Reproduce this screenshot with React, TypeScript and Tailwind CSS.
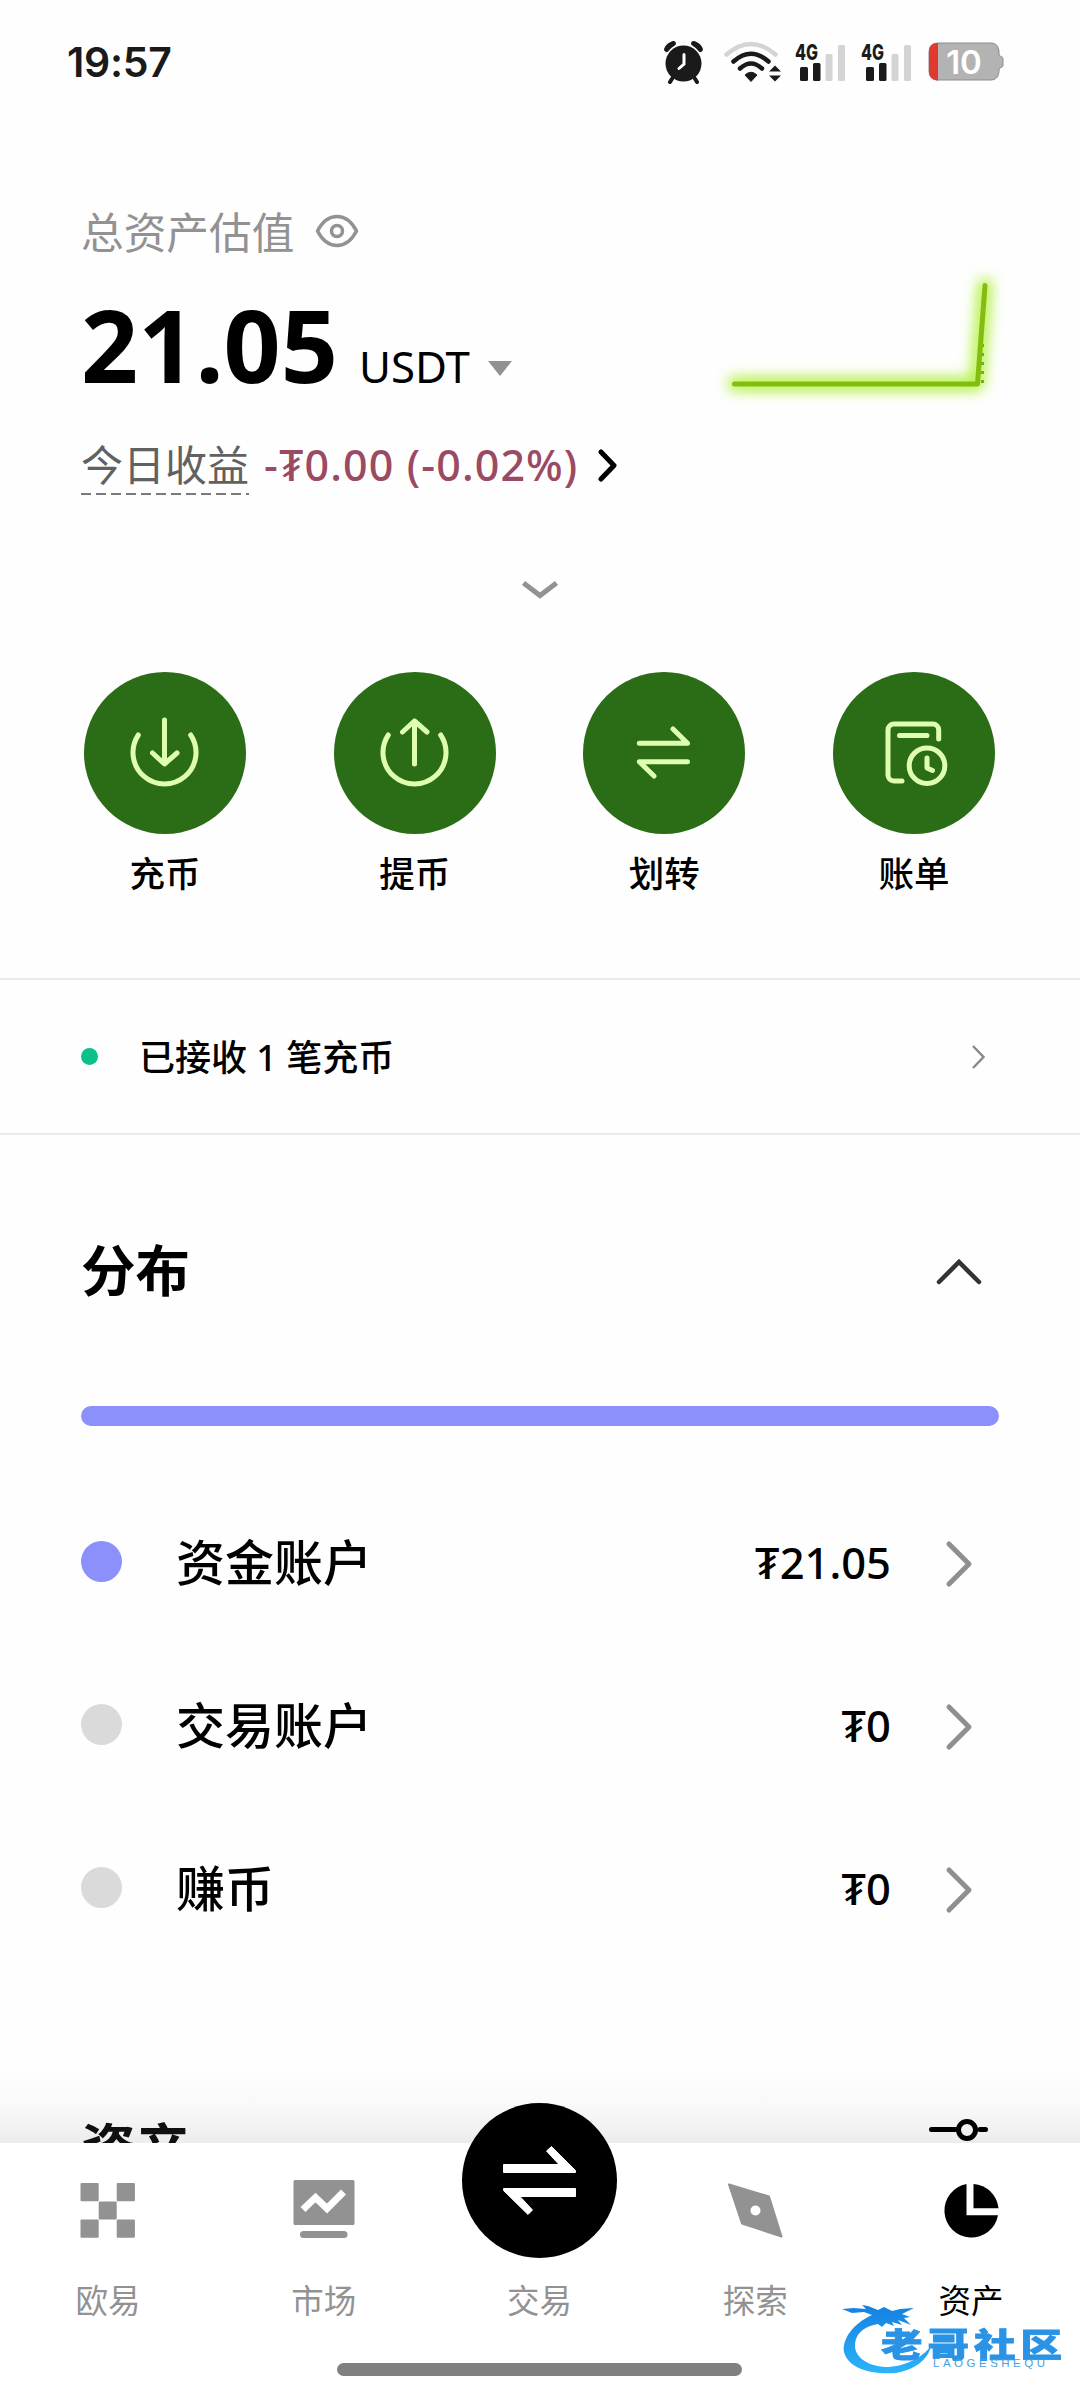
import type { ReactNode } from "react";

const cjk = "font-['Noto_Sans_CJK_SC',sans-serif]";

const Signal = () => (
  <svg width="52" height="40" viewBox="0 0 52 40">
    <text x="1" y="18" fontSize="21.5" fontWeight="800" textLength="23" lengthAdjust="spacingAndGlyphs" fill="#1a1a1a" fontFamily="Inter, sans-serif">
      4G
    </text>
    <rect x="6" y="25" width="8" height="14" rx="1.5" fill="#1a1a1a" />
    <rect x="19" y="21" width="7.5" height="18" rx="1.5" fill="#1a1a1a" />
    <rect x="31.5" y="12" width="7" height="27" rx="1.5" fill="#d4d4d4" />
    <rect x="44" y="3" width="7" height="36" rx="1.5" fill="#d4d4d4" />
  </svg>
);

const StatusBar = () => (
  <div className="flex h-[124px] items-center justify-between pl-[67px] pr-[76px]">
    <span className="font-['Inter',sans-serif] text-[41px] leading-[50px] font-semibold tracking-[-0.3px] text-[#1a1a1a]">
      19:57
    </span>
    <div className="flex items-center">
      {/* alarm */}
      <svg width="42" height="44" viewBox="0 0 42 44" fill="none">
        <circle cx="20.5" cy="23.5" r="18" fill="#1a1a1a" />
        <path d="M3.5 9.5Q5.500 5 10.500 3.500Q8 4.500 3.500 9.500zM37.500 9.500Q35.500 5 30.500 3.500Q33 4.500 37.500 9.500z" stroke="#1a1a1a" strokeWidth="5" strokeLinecap="round" strokeLinejoin="round" />
        <path d="M9.500 38l-2.500 4M31.500 38l2.500 4" stroke="#1a1a1a" strokeWidth="4" strokeLinecap="round" />
        <path d="M21 14.500v9.500l-5 4.500" stroke="#fff" strokeWidth="3" strokeLinecap="round" />
      </svg>
      {/* wifi */}
      <svg className="ml-[18px]" width="58" height="42" viewBox="0 0 58 42" fill="none">
        <path d="M3.500 13.500Q28 -7.500 52.500 13.500" stroke="#d4d4d4" strokeWidth="4.500" strokeLinecap="round" />
        <path d="M10.500 20.500Q28 5 45.500 20.500" stroke="#1a1a1a" strokeWidth="4.500" strokeLinecap="round" />
        <path d="M17 27.500Q28 17.500 39 27.500" stroke="#1a1a1a" strokeWidth="4.500" strokeLinecap="round" />
        <path d="M28 40.500l-6-6.500Q28 28.500 34 34z" fill="#1a1a1a" stroke="#1a1a1a" strokeLinejoin="round" />
        <path d="M46 30.500l6-6 6 6zM46 34.500h12l-6 6z" fill="#1a1a1a" />
      </svg>
      <div className="ml-[13px] flex gap-[14px]">
        <Signal />
        <Signal />
      </div>
      {/* battery */}
      <svg className="ml-[16px] overflow-visible" width="76" height="40" viewBox="0 0 76 40">
        <path d="M10 1h53q7 0 8 8v3q0 2 2 2.500t2 2.500v6q0 2-2 2.500t-2 2.500v2q-1 8-8 8H10q-9 0-9-9V10q0-9 9-9z" fill="#b3b3b3" stroke="#8c8c8c" />
        <path d="M8.500 1H10v37.500H8.500Q1 37 1 29V10q0-8 7.500-9z" fill="#e03a30" />
        <text x="36" y="32" fontSize="33" fontWeight="600" textAnchor="middle" fill="#fff" fontFamily="Inter, sans-serif">
          10
        </text>
      </svg>
    </div>
  </div>
);

const Sparkline = () => (
  <svg className="absolute top-[270px] left-[715px] overflow-visible" width="290" height="135" viewBox="0 0 290 135" fill="none">
    <path
      className="blur-[7px]"
      d="M19 114H262L270 15"
      stroke="#a9f02c"
      strokeWidth="13"
      strokeLinecap="round"
      strokeLinejoin="round"
    />
    <path d="M267.500 74V117" stroke="#7bab22" strokeWidth="3" strokeDasharray="3 6" />
    <path d="M19.500 114H262.500L270 15.500" stroke="#84bd10" strokeWidth="5" strokeLinecap="round" strokeLinejoin="round" />
  </svg>
);

const Summary = () => (
  <section className="px-[81px]">
    <div className="mt-[82px] flex h-12 items-center">
      <span className={`${cjk} text-[42.700px] leading-[48px] font-normal text-[#929292]`}>总资产估值</span>
      <svg className="mt-[2px] ml-[21px]" width="44" height="34" viewBox="0 0 44 34" fill="none" stroke="#929292" strokeWidth="3.500">
        <path d="M2.500 17Q10 2.500 22 2.500T41.500 17Q34 31.500 22 31.500T2.500 17z" strokeLinejoin="round" />
        <circle cx="22" cy="17" r="5.500" />
      </svg>
    </div>

    <div className="mt-[40px] flex h-[100px] items-baseline font-['Noto_Sans',sans-serif] text-black">
      <span className="text-[100px] leading-none font-bold">21.05</span>
      <span className="ml-[21px] text-[43.800px] leading-none">USDT</span>
      <svg className="ml-[18px] -translate-y-[7px]" width="24" height="15" viewBox="0 0 24 15">
        <path d="M0 0h24L12 15z" fill="#929292" />
      </svg>
    </div>

    <div className="mt-[41px] flex h-[60px] items-start">
      <div>
        <div className={`${cjk} text-[42px] leading-[56px] text-[#616161]`}>今日收益</div>
        <div className="mt-0.5 h-[2px] bg-[repeating-linear-gradient(90deg,#7a7a7a_0_10px,transparent_10px_15px)]" />
      </div>
      <span className="ml-[15px] font-['Noto_Sans',sans-serif] text-[43px] leading-[60px] font-medium tracking-[1.100px] whitespace-nowrap text-[#9b4a63]">
        -₮0.00 (-0.02%)
      </span>
      <svg className="mt-[13px] ml-[19px]" width="22" height="34" viewBox="0 0 22 34" fill="none">
        <path d="M4 4l13 13.500L4 31" stroke="#000" strokeWidth="5" strokeLinecap="round" strokeLinejoin="round" />
      </svg>
    </div>

    <div className="mt-[74px] flex h-10 items-center justify-center">
      <svg width="40" height="22" viewBox="0 0 40 22" fill="none">
        <path d="M3.500 5L20 17.500 36.500 5" stroke="#929292" strokeWidth="5" />
      </svg>
    </div>
  </section>
);

const actions: { label: string; icon: ReactNode }[] = [
  {
    label: "充币",
    icon: (
      <>
        <path d="M54.300 63A31.500 31.500 0 1 0 106.700 63" />
        <path d="M80.500 48V91M68.500 81l12 11 12.500-11" />
      </>
    ),
  },
  {
    label: "提币",
    icon: (
      <>
        <path d="M54.300 63A31.500 31.500 0 1 0 106.700 63" />
        <path d="M80.500 92V49M68.500 60l12-11 12.500 11" />
      </>
    ),
  },
  {
    label: "划转",
    icon: <path d="M56.300 71.300H104.500L90 57M104.500 89.700H56.300L71 104" />,
  },
  {
    label: "账单",
    icon: (
      <>
        <path d="M105.700 67V58a6 6 0 0 0-6-6H61a6 6 0 0 0-6 6v45a6 6 0 0 0 6 6h8M66.500 63.500H94" />
        <circle cx="94" cy="93.700" r="17.800" />
        <path d="M94 86v10l5.500 2.500" />
      </>
    ),
  },
];

const Actions = () => (
  <section className="mt-[63px] flex justify-between pr-[85px] pl-[84px]">
    {actions.map((action) => (
      <div key={action.label} className="flex flex-col items-center">
        <div className="size-[162px] rounded-full bg-[#2b6d17]">
          <svg
            width="162"
            height="162"
            viewBox="0 0 162 162"
            fill="none"
            stroke="#dfffaf"
            strokeWidth="5"
            strokeLinecap="round"
            strokeLinejoin="round"
          >
            {action.icon}
          </svg>
        </div>
        <span className={`${cjk} mt-[13px] text-[35.500px] leading-[49px] font-medium text-black`}>{action.label}</span>
      </div>
    ))}
  </section>
);

const Notice = () => (
  <section className="mt-[82px] flex h-[157px] items-center border-y-2 border-[#ebebeb] pr-[94px] pl-[81px]">
    <span className="size-[17px] rounded-full bg-[#0cc088]" />
    <span className="mt-[2px] ml-[41px] font-['Noto_Sans','Noto_Sans_CJK_SC',sans-serif] text-[36px] leading-[48px] font-medium text-black">
      已接收 1 笔充币
    </span>
    <svg className="ml-auto" width="16" height="26" viewBox="0 0 16 26" fill="none">
      <path d="M3 2l10.500 11L3 24" stroke="#8a8a8a" strokeWidth="2.500" />
    </svg>
  </section>
);

const accounts = [
  { name: "资金账户", amount: "₮21.05", dot: "bg-[#8b90fb]" },
  { name: "交易账户", amount: "₮0", dot: "bg-[#dadada]" },
  { name: "赚币", amount: "₮0", dot: "bg-[#dadada]" },
];

const Distribution = () => (
  <section className="mt-[97px] px-[81px]">
    <div className="flex h-[72px] items-center justify-between pr-[15px]">
      <h2 className={`${cjk} text-[54.500px] leading-[72px] font-bold text-black`}>分布</h2>
      <svg className="mt-2" width="50" height="30" viewBox="0 0 50 30" fill="none">
        <path d="M5 25L25 5l20 20" stroke="#333" strokeWidth="4.500" strokeLinecap="round" />
      </svg>
    </div>
    <div className="mt-[102px] h-5 rounded-full bg-[#8b90fb]" />
    <div className="mt-[54px]">
      {accounts.map((account) => (
        <div key={account.name} className="flex h-[163px] items-center pr-[26px]">
          <span className={`size-[41px] rounded-full ${account.dot}`} />
          <span className={`${cjk} mb-[3px] ml-[54px] text-[49px] leading-[60px] font-medium text-black`}>
            {account.name}
          </span>
          <span className="ml-auto font-['Noto_Sans',sans-serif] text-[43.500px] leading-[60px] font-medium text-black">
            {account.amount}
          </span>
          <svg className="mt-[4px] ml-[54px]" width="28" height="50" viewBox="0 0 28 50" fill="none">
            <path d="M4 5l20 20L4 45" stroke="#8f8f8f" strokeWidth="5" strokeLinecap="round" strokeLinejoin="round" />
          </svg>
        </div>
      ))}
    </div>
  </section>
);

const Assets = () => (
  <section className="mt-[141px] flex h-[72px] items-start justify-between pr-[90px] pl-[81px]">
    <h2 className={`${cjk} text-[54.500px] leading-[72px] font-bold text-[#111]`}>资产</h2>
    <svg className="mt-[6px]" width="64" height="60" viewBox="0 0 64 60" fill="none" stroke="#000" strokeWidth="5" strokeLinecap="round">
      <path d="M5.500 13.500H32M54 13.500h5.500" />
      <circle cx="41" cy="14" r="8.500" />
      <path d="M5.500 42H12M34 42h25.500" />
      <circle cx="22" cy="42" r="8.500" />
    </svg>
  </section>
);

const tabs: { label: string; icon: ReactNode; active?: boolean; center?: boolean }[] = [
  {
    label: "欧易",
    icon: (
      <>
        <rect x="4.500" y="3" width="18.200" height="18.200" rx="1" />
        <rect x="40.700" y="3" width="18.200" height="18.200" rx="1" />
        <rect x="22.700" y="21.500" width="18" height="18" rx="1" />
        <rect x="4.500" y="39.500" width="18.200" height="18.200" rx="1" />
        <rect x="40.700" y="39.500" width="18.200" height="18.200" rx="1" />
      </>
    ),
  },
  {
    label: "市场",
    icon: (
      <>
        <rect x="1.500" y="0" width="61" height="45" rx="1.500" />
        <rect x="8" y="51" width="47.500" height="7" rx="3.500" />
        <path d="M11 29.500L23.500 17.500 35 28.500 51.500 12" fill="none" stroke="#fff" strokeWidth="7" />
      </>
    ),
  },
  {
    label: "交易",
    center: true,
    icon: (
      <g stroke="#fff" strokeLinejoin="round">
        <path d="M41.500 61.500H97L84.500 48 89.500 43.500 113.500 67.500V69.500H41.500z" />
        <path d="M113.500 85.500H41.500V87.500L66 111.500 70.500 107 58 93.500H113.500z" />
      </g>
    ),
  },
  {
    label: "探索",
    icon: (
      <>
        <path d="M6 4.500L46 16.500 58.500 56.500 19 43.500z" stroke="currentColor" strokeWidth="2" strokeLinejoin="round" />
        <circle cx="32.500" cy="30.500" r="5" fill="#fff" />
      </>
    ),
  },
  {
    label: "资产",
    active: true,
    icon: (
      <>
        <path d="M27.500 4A27 27 0 1 0 59 35.300H27.500z" />
        <path d="M34.500 4A27 27 0 0 1 59.500 28.300H34.500z" />
      </>
    ),
  },
];

const TabBar = () => (
  <nav className="relative h-[257px] bg-white">
    <div className="flex">
      {tabs.map((tab) => (
        <div
          key={tab.label}
          className={`flex w-[215.800px] flex-col items-center ${tab.active ? "text-black" : "text-[#929292]"}`}
        >
          {tab.center ? (
            <div className="-mt-10 mb-4 size-[155px] rounded-full bg-black">
              <svg width="155" height="155" viewBox="0 0 155 155" fill="#fff">
                {tab.icon}
              </svg>
            </div>
          ) : (
            <svg className="mt-[37px] mb-[34px]" width="64" height="60" viewBox="0 0 64 60" fill="currentColor">
              {tab.icon}
            </svg>
          )}
          <span className={`${cjk} text-[32.500px] leading-[50px]`}>{tab.label}</span>
        </div>
      ))}
    </div>
    <div className="mt-[39px] ml-[337px] h-[13px] w-[405px] rounded-full bg-[#808080]" />
  </nav>
);

const Watermark = () => (
  <div className="absolute top-[2300px] left-[838px] h-[80px] w-[232px]">
    <svg className="absolute top-0 left-0" width="110" height="80" viewBox="0 0 110 80">
      <defs>
        <linearGradient id="dragon" x1="0" y1="0" x2="0" y2="1">
          <stop offset="0" stopColor="#1580e0" />
          <stop offset="1" stopColor="#2bb4fa" />
        </linearGradient>
      </defs>
      <path
        d="M34 15C14 24 4 40 6 52C10 68 32 75 58 73C76 70 90 60 93 46C84 58 66 67 48 67C28 66 16 56 17 44C18 32 28 26 40 24L44 27 48 23 56 26 54 22 64 25 60 20 73 25 66 18 72 17 64 14 76 8 62 9 54 11 46 7 40 10 30 6 24 5 28 9 16 8 4 9 14 13 26 12z"
        fill="url(#dragon)"
      />
    </svg>
    <span
      className={`${cjk} absolute top-[25px] left-[43px] origin-left scale-y-[0.800] text-[41.500px] leading-[36px] font-black tracking-[5px] whitespace-nowrap text-[#2a93e6] [-webkit-text-stroke:1px_#2a93e6]`}
    >
      老哥社区
    </span>
    <span className="absolute top-[58px] left-[95px] font-['Liberation_Sans',sans-serif] text-[11.500px] leading-[10px] tracking-[3.500px] whitespace-nowrap text-[#4a9fe0]">
      LAOGESHEQU
    </span>
  </div>
);

const App = () => {
  return (
    <div className="relative h-[2400px] w-[1080px] overflow-hidden bg-white">
      <main className="relative h-[2143px] overflow-hidden bg-[#fefefe]">
        <div className="flex flex-col *:shrink-0">
          <StatusBar />
          <Summary />
          <Actions />
          <Notice />
          <Distribution />
          <Assets />
        </div>
        <Sparkline />
        <div className="absolute inset-x-0 bottom-0 h-[75px] bg-linear-to-b from-black/0 via-black/[0.020] to-black/[0.070]" />
      </main>
      <TabBar />
      <Watermark />
    </div>
  );
};

export default App;
